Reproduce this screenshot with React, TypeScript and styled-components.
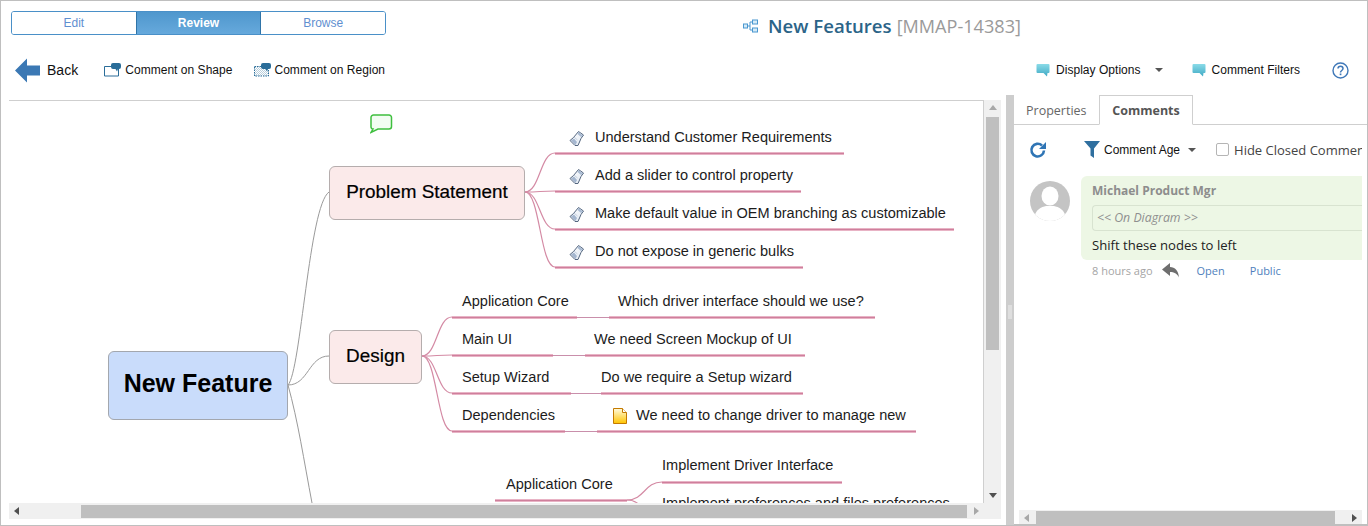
import styled, { createGlobalStyle } from "styled-components";

const Global = createGlobalStyle`
	html, body { margin: 0; padding: 0; background: #fff; }
	body { font-family: "Liberation Sans", Arial, sans-serif; }
`;

const Frame = styled.div`
	width: 1368px;
	height: 526px;
	box-sizing: border-box;
	border: 1px solid #bfbfbf;
	display: flex;
	flex-direction: column;
	overflow: hidden;
	background: #fff;
`;

const Header = styled.div`
	height: 46px;
	display: flex;
	align-items: flex-start;
	flex: none;
`;

const Segments = styled.div`
	margin: 10px 0 0 10px;
	width: 375px;
	height: 24px;
	box-sizing: border-box;
	border: 1px solid #4a90c8;
	border-radius: 3px;
	display: flex;
	overflow: hidden;
`;

const Segment = styled.div<{ $active?: boolean }>`
	flex: 1;
	display: flex;
	align-items: center;
	justify-content: center;
	font-size: 12px;
	color: ${(p) => (p.$active ? "#fff" : "#5f8fd0")};
	font-weight: ${(p) => (p.$active ? "bold" : "normal")};
	background: ${(p) => (p.$active ? "linear-gradient(#4f97cd, #66a9dc)" : "#fff")};
	border-left: ${(p) => (p.$active ? "1px solid #2f74a8" : "none")};
	border-right: ${(p) => (p.$active ? "1px solid #2f74a8" : "none")};
`;

const Title = styled.div`
	margin: 13px 0 0 357px;
	display: flex;
	align-items: center;
	font-family: "Open Sans", sans-serif;
	font-size: 18px;
	line-height: 24px;
	white-space: nowrap;
	svg { margin-right: 10px; }
	b { color: #2b6488; font-weight: 600; font-size: 18.6px; margin-right: 5px; }
	span { color: #9a9a9a; font-size: 18.1px; }
`;

const Toolbar = styled.div`
	height: 48px;
	flex: none;
	display: flex;
	align-items: flex-start;
	padding: 9px 0 0 14px;
	box-sizing: border-box;
`;

const ToolItem = styled.div<{ $gap?: number }>`
	display: flex;
	align-items: center;
	height: 28px;
	font-size: 12px;
	letter-spacing: 0.03px;
	color: #111;
	margin-right: ${(p) => p.$gap ?? 0}px;
	white-space: nowrap;
	svg { flex: none; }
`;

const BackLabel = styled.span`
	font-size: 14px;
	margin-left: 7px;
`;

const ToolSpacer = styled.div`
	width: 651px;
	flex: none;
`;

const Caret = styled.i`
	display: inline-block;
	width: 0;
	height: 0;
	border-left: 4px solid transparent;
	border-right: 4px solid transparent;
	border-top: 4px solid #555;
	margin-left: 14px;
`;

const Main = styled.div`
	flex: 1;
	min-height: 0;
	display: flex;
	align-items: stretch;
`;

const CanvasWrap = styled.div`
	margin: 5px 0 0 8px;
	width: 992px;
	height: 419px;
	flex: none;
	display: grid;
	grid-template-columns: 975px 17px;
	grid-template-rows: 403px 16px;
`;

const Canvas = styled.div`
	position: relative;
	overflow: hidden;
	box-sizing: border-box;
	border-top: 1px solid #cfcfcf;
	border-right: 1px solid #cfcfcf;
	background: #fff;
`;

const Wires = styled.svg`
	position: absolute;
	left: 0;
	top: 0;
`;

const MapBox = styled.div<{ $x: number; $y: number; $w: number; $h: number; $root?: boolean }>`
	position: absolute;
	left: ${(p) => p.$x - 9}px;
	top: ${(p) => p.$y - 101}px;
	width: ${(p) => p.$w}px;
	height: ${(p) => p.$h}px;
	box-sizing: border-box;
	display: flex;
	align-items: center;
	justify-content: center;
	padding-bottom: ${(p) => (p.$root ? 4 : 2)}px;
	border: 1px solid ${(p) => (p.$root ? "#a3a7ae" : "#b5adad")};
	border-radius: 6px;
	background: ${(p) => (p.$root ? "#c9dcfb" : "#fbeaea")};
	font-size: ${(p) => (p.$root ? 25 : 18.9)}px;
	font-weight: ${(p) => (p.$root ? "bold" : "normal")};
	-webkit-text-stroke: ${(p) => (p.$root ? "0" : "0.2px #000")};
	color: #000;
	white-space: nowrap;
`;

const MapText = styled.div<{ $x: number; $y: number }>`
	position: absolute;
	left: ${(p) => p.$x - 9}px;
	top: ${(p) => p.$y - 101 - 10}px;
	height: 20px;
	line-height: 20px;
	font-size: 14.55px;
	color: #1c1c1c;
	white-space: nowrap;
`;

const MapIcon = styled.div<{ $x: number; $y: number }>`
	position: absolute;
	left: ${(p) => p.$x - 9}px;
	top: ${(p) => p.$y - 101}px;
	line-height: 0;
`;

const ScrollTrack = styled.div<{ $vertical?: boolean }>`
	position: relative;
	background: #f0f0f0;
	display: flex;
	flex-direction: ${(p) => (p.$vertical ? "column" : "row")};
	align-items: center;
	justify-content: space-between;
`;

const ScrollThumb = styled.div`
	position: absolute;
	background: #bfbfbf;
`;

const VThumb = styled(ScrollThumb)`
	left: 2px;
	top: 17px;
	width: 13px;
	height: 233px;
`;

const HThumb = styled(ScrollThumb)`
	left: 72px;
	top: 2px;
	width: 886px;
	height: 13px;
`;

const Corner = styled.div`
	background: #f0f0f0;
`;

const Arrow = styled.i<{ $dir: "up" | "down" | "left" | "right"; $dim?: boolean }>`
	display: block;
	width: 0;
	height: 0;
	margin: 5px;
	border: 4px solid transparent;
	${(p) => {
		const c = p.$dim ? "#a8a8a8" : "#505050";
		if (p.$dir === "up") return `border-bottom: 5px solid ${c}; border-top-width: 0;`;
		if (p.$dir === "down") return `border-top: 5px solid ${c}; border-bottom-width: 0;`;
		if (p.$dir === "left") return `border-right: 5px solid ${c}; border-left-width: 0;`;
		return `border-left: 5px solid ${c}; border-right-width: 0;`;
	}}
`;

const Splitter = styled.div`
	width: 8px;
	flex: none;
	margin-left: 5px;
	background: #cdcdcd;
	position: relative;
	&::after {
		content: "";
		position: absolute;
		left: 2px;
		top: 210px;
		width: 4px;
		height: 14px;
		background: #dedede;
	}
`;

const Side = styled.div`
	flex: 1;
	min-width: 0;
	display: flex;
	flex-direction: column;
	font-family: "Open Sans", sans-serif;
	overflow: hidden;
	position: relative;
`;

const Tabs = styled.div`
	height: 30px;
	flex: none;
	box-sizing: border-box;
	border-bottom: 1px solid #cfcfcf;
	display: flex;
	padding-left: 12px;
	align-items: stretch;
`;

const Tab = styled.div<{ $active?: boolean }>`
	display: flex;
	align-items: center;
	font-size: 12.5px;
	box-sizing: border-box;
	padding-top: ${(p) => (p.$active ? 0 : 2)}px;
	color: ${(p) => (p.$active ? "#555" : "#666")};
	font-weight: ${(p) => (p.$active ? 700 : 400)};
	width: ${(p) => (p.$active ? "94px" : "73px")};
	justify-content: ${(p) => (p.$active ? "center" : "flex-start")};
	height: ${(p) => (p.$active ? "30px" : "auto")};
	background: #fff;
	border: ${(p) => (p.$active ? "1px solid #cfcfcf" : "none")};
	border-bottom: ${(p) => (p.$active ? "1px solid #fff" : "none")};
`;

const Filters = styled.div`
	height: 51px;
	width: 348px;
	flex: none;
	display: flex;
	align-items: center;
	padding: 0 0 2px 15px;
	box-sizing: border-box;
	overflow: hidden;
	white-space: nowrap;
	svg { flex: none; }
`;

const FilterLabel = styled.span`
	font-family: "Liberation Sans", Arial, sans-serif;
	font-size: 12px;
	color: #111;
	margin-left: 4px;
	flex: none;
`;

const FilterCaret = styled(Caret)`
	margin: 0 20px 0 8px;
	flex: none;
`;

const Check = styled.span`
	width: 11px;
	height: 11px;
	border: 1px solid #b5b5b5;
	border-radius: 2px;
	background: #fff;
	flex: none;
`;

const CheckLabel = styled.span`
	font-size: 13px;
	color: #444;
	margin-left: 5px;
	flex: none;
`;

const CommentRow = styled.div`
	display: flex;
	align-items: flex-start;
	padding-left: 16px;
	width: 348px;
	box-sizing: border-box;
`;

const Avatar = styled.div`
	width: 40px;
	height: 40px;
	margin-top: 5px;
	flex: none;
	line-height: 0;
`;

const CommentBody = styled.div`
	margin-left: 11px;
	flex: 1;
	min-width: 0;
`;

const Bubble = styled.div`
	height: 84px;
	box-sizing: border-box;
	background: #edf7e5;
	border-radius: 6px 0 0 6px;
	padding: 7px 0 0 11px;
`;

const Author = styled.div`
	font-size: 12px;
	font-weight: 700;
	color: #8d8d8d;
	line-height: 16px;
`;

const OnDiagram = styled.div`
	margin-top: 6px;
	height: 26px;
	box-sizing: border-box;
	border: 1px solid #d8e3d0;
	border-right: none;
	border-radius: 4px 0 0 4px;
	padding-left: 4px;
	font-size: 12.3px;
	font-style: italic;
	line-height: 24px;
	color: #8f8f8f;
`;

const CommentText = styled.div`
	margin-top: 4px;
	font-size: 13.1px;
	line-height: 20px;
	color: #222;
`;

const Meta = styled.div`
	display: flex;
	align-items: center;
	height: 20px;
	padding-left: 11px;
	font-size: 11px;
	color: #a5a5a5;
`;

const MetaLink = styled.span<{ $left: number }>`
	color: #4f7fbd;
	margin-left: ${(p) => p.$left}px;
`;

const SideScroll = styled(ScrollTrack)`
	position: absolute;
	left: 5px;
	bottom: 0;
	width: 343px;
	height: 15px;
`;

const SideThumb = styled(ScrollThumb)`
	left: 17px;
	top: 1px;
	width: 299px;
	height: 13px;
`;

const BottomRule = styled.div`
	position: absolute;
	left: 0;
	right: 0;
	bottom: 0;
	height: 1px;
	background: #bfbfbf;
`;

const BubbleIcon = () => (
	<svg width="14" height="14" viewBox="0 0 14 14" style={{ marginRight: 6 }}>
		<defs>
			<linearGradient id="bub" x1="0" y1="0" x2="0" y2="1">
				<stop offset="0" stopColor="#8adbe8" />
				<stop offset="1" stopColor="#3fa9c4" />
			</linearGradient>
		</defs>
		<path d="M1.500 1h11a1 1 0 0 1 1 1v7a1 1 0 0 1-1 1H11.500l-.5 3.500L7.500 10h-6a1 1 0 0 1-1-1V2a1 1 0 0 1 1-1z" fill="url(#bub)" />
	</svg>
);

const ScrollGlyph = () => (
	<svg width="16" height="17" viewBox="0 0 16 17">
		<defs>
			<linearGradient id="scr" x1="0" y1="0" x2="1" y2="1">
				<stop offset="0" stopColor="#ffffff" />
				<stop offset="1" stopColor="#dfe7f1" />
			</linearGradient>
		</defs>
		<path d="M9.500 1.500L14.500 5 12 8.500 9 15.500 6 15.500 1 10.500 4.500 7.500z" fill="url(#scr)" stroke="#53657e" strokeWidth="1" strokeLinejoin="round" />
		<path d="M9.500 2l4.500 3.500-2 1.500-3.500-3z" fill="#a9bbd3" />
		<path d="M2 10.500l4.500 4.500 1.500-3-3-3.500z" fill="#a4b6cf" />
		<path d="M5 7l3.500 3" stroke="#c3cfdf" strokeWidth="1" fill="none" />
	</svg>
);

const fans: number[][] = [
	[525, 192, 555, 153],
	[525, 192, 555, 191],
	[525, 192, 555, 229],
	[525, 192, 555, 267],
	[422, 356, 452, 317],
	[422, 356, 452, 355],
	[422, 356, 452, 393],
	[422, 356, 452, 431],
	[627, 500, 662, 482],
	[627, 500, 662, 520],
];

const thick: number[][] = [
	[555, 844, 153],
	[555, 801, 191],
	[555, 954, 229],
	[555, 803, 267],
	[452, 577, 317],
	[609, 875, 317],
	[452, 553, 355],
	[585, 805, 355],
	[452, 571, 393],
	[601, 803, 393],
	[452, 565, 431],
	[597, 916, 431],
	[495, 627, 500],
	[662, 842, 482],
];

const thin: number[][] = [
	[577, 609, 317],
	[553, 585, 355],
	[571, 601, 393],
	[565, 597, 431],
];

const scrollItems = [
	{ y: 137, text: "Understand Customer Requirements" },
	{ y: 175, text: "Add a slider to control property" },
	{ y: 213, text: "Make default value in OEM branching as customizable" },
	{ y: 251, text: "Do not expose in generic bulks" },
];

const plainItems = [
	{ x: 462, y: 301, text: "Application Core" },
	{ x: 618, y: 301, text: "Which driver interface should we use?" },
	{ x: 462, y: 339, text: "Main UI" },
	{ x: 594, y: 339, text: "We need Screen Mockup of UI" },
	{ x: 462, y: 377, text: "Setup Wizard" },
	{ x: 601, y: 377, text: "Do we require a Setup wizard" },
	{ x: 462, y: 415, text: "Dependencies" },
	{ x: 636, y: 415, text: "We need to change driver to manage new" },
	{ x: 506, y: 484, text: "Application Core" },
	{ x: 662, y: 465, text: "Implement Driver Interface" },
	{ x: 662, y: 503, text: "Implement preferences and files preferences" },
];

const curve = ([x1, y1, x2, y2]: number[], ox = 9, oy = 101) => {
	const ax = x1 - ox;
	const ay = y1 - oy;
	const bx = x2 - ox;
	const by = y2 - oy;
	const mid = (ax + bx) / 2;
	return `M${ax} ${ay}C${mid} ${ay} ${mid} ${by} ${bx} ${by}`;
};

export default function App() {
	return (
		<>
			<Global />
			<Frame>
				<Header>
					<Segments>
						<Segment>Edit</Segment>
						<Segment $active>Review</Segment>
						<Segment>Browse</Segment>
					</Segments>
					<Title>
						<svg width="15" height="14" viewBox="0 0 15 14" fill="#d6ebf7" stroke="#4a97d0" strokeWidth="1">
							<rect x="0.500" y="5" width="4" height="4" />
							<rect x="9.500" y="1" width="5" height="4" />
							<rect x="9.500" y="9" width="5" height="4" />
							<path d="M4.500 7L7 7M7 3v8M7 3h2.500M7 11h2.500" fill="none" />
						</svg>
						<b>New Features</b>
						<span>[MMAP-14383]</span>
					</Title>
				</Header>
				<Toolbar>
					<ToolItem $gap={26}>
						<svg width="25" height="25" viewBox="0 0 25 25">
							<path d="M0 12.500L12 0.500v7h13v10H12v7z" fill="#3b78b4" />
						</svg>
						<BackLabel>Back</BackLabel>
					</ToolItem>
					<ToolItem $gap={22}>
						<svg width="17" height="14" viewBox="0 0 17 14" style={{ marginRight: 4 }}>
							<path d="M7 3.500H0.500V13h14V6" fill="none" stroke="#2a6d99" />
							<path d="M9 0h6a2 2 0 0 1 2 2v2a2 2 0 0 1-2 2h-1l-1 2.500L11.500 6H9a2 2 0 0 1-2-2V2a2 2 0 0 1 2-2z" fill="#2a6d99" />
						</svg>
						Comment on Shape
					</ToolItem>
					<ToolItem>
						<svg width="17" height="14" viewBox="0 0 17 14" style={{ marginRight: 3 }}>
							<defs>
								<pattern id="hatch" width="2" height="2" patternUnits="userSpaceOnUse">
									<path d="M0 2L2 0" stroke="#b9cfdd" strokeWidth="1" />
								</pattern>
							</defs>
							<rect x="0.500" y="3.500" width="14" height="9.500" fill="url(#hatch)" stroke="#2a6d99" strokeDasharray="1.500 1" />
							<path d="M9 0h6a2 2 0 0 1 2 2v2a2 2 0 0 1-2 2h-1l-1 2.500L11.500 6H9a2 2 0 0 1-2-2V2a2 2 0 0 1 2-2z" fill="#2a6d99" />
						</svg>
						Comment on Region
					</ToolItem>
					<ToolSpacer />
					<ToolItem $gap={29}>
						<BubbleIcon />
						Display Options
						<Caret />
					</ToolItem>
					<ToolItem $gap={32}>
						<BubbleIcon />
						Comment Filters
					</ToolItem>
					<ToolItem>
						<svg width="17" height="17" viewBox="0 0 17 17">
							<circle cx="8.500" cy="8.500" r="7.500" fill="#fff" stroke="#3f78b8" strokeWidth="1.400" />
							<path d="M6 6.500c0-3 5-3 5 0 0 2-2.500 2-2.500 4" fill="none" stroke="#3f78b8" strokeWidth="1.500" />
							<rect x="7.700" y="11.500" width="1.700" height="1.700" fill="#3f78b8" />
						</svg>
					</ToolItem>
				</Toolbar>
				<Main>
					<CanvasWrap>
						<Canvas>
							<Wires width="975" height="403" fill="none">
								<g stroke="#9a9a9a" strokeWidth="1">
									<path d="M279 284C292 270 300 105 320 91" />
									<path d={curve([288, 385, 329, 356])} />
									<path d="M279 284C289 320 295 360 303 402" />
								</g>
								<g stroke="#d48aa4" strokeWidth="1.200">
									{fans.map((f) => (
										<path key={f.join()} d={curve(f)} />
									))}
								</g>
								<g stroke="#c98fab" strokeWidth="1">
									{thin.map(([a, b, y]) => (
										<path key={`${a}-${y}`} d={`M${a - 9} ${y - 100.5}H${b - 9}`} />
									))}
								</g>
								<g stroke="#e8b3c5" strokeWidth="3">
									{thick.map(([a, b, y]) => (
										<path key={`${a}-${y}`} d={`M${a - 9} ${y - 100.5}H${b - 9}`} />
									))}
								</g>
								<g stroke="#cf7f9c" strokeWidth="1">
									{thick.map(([a, b, y]) => (
										<path key={`${a}-${y}`} d={`M${a - 9} ${y - 100.5}H${b - 9}`} />
									))}
								</g>
							</Wires>
							<MapIcon $x={370} $y={114}>
								<svg width="23" height="20" viewBox="0 0 23 20">
									<path
										d="M3.500 1h15.500a2.500 2.500 0 0 1 2.500 2.500v9a2.500 2.500 0 0 1-2.500 2.500H8L1 18.500 3 15a2.200 2.200 0 0 1-2-2.500v-9A2.500 2.500 0 0 1 3.500 1z"
										fill="#f3fdf3"
										stroke="#3fbf3f"
										strokeWidth="1.500"
									/>
								</svg>
							</MapIcon>
							<MapBox $root $x={108} $y={351} $w={180} $h={69}>
								New Feature
							</MapBox>
							<MapBox $x={329} $y={166} $w={196} $h={54}>
								Problem Statement
							</MapBox>
							<MapBox $x={329} $y={330} $w={93} $h={54}>
								Design
							</MapBox>
							{scrollItems.map((it) => (
								<div key={it.y}>
									<MapIcon $x={569} $y={it.y - 7}>
										<ScrollGlyph />
									</MapIcon>
									<MapText $x={595} $y={it.y}>
										{it.text}
									</MapText>
								</div>
							))}
							{plainItems.map((it) => (
								<MapText key={it.text + it.x} $x={it.x} $y={it.y}>
									{it.text}
								</MapText>
							))}
							<MapIcon $x={613} $y={408}>
								<svg width="14" height="16" viewBox="0 0 14 16">
									<defs>
										<linearGradient id="note" x1="0" y1="0" x2="0" y2="1">
											<stop offset="0" stopColor="#fffbe0" />
											<stop offset="1" stopColor="#ffc400" />
										</linearGradient>
									</defs>
									<path d="M0.500 0.500h9l4 4v11h-13z" fill="url(#note)" stroke="#c47a00" />
									<path d="M9.500 0.500v4h4" fill="#fff" stroke="#c47a00" />
								</svg>
							</MapIcon>
						</Canvas>
						<ScrollTrack $vertical>
							<Arrow $dir="up" $dim />
							<VThumb />
							<Arrow $dir="down" />
						</ScrollTrack>
						<ScrollTrack>
							<Arrow $dir="left" />
							<HThumb />
							<Arrow $dir="right" $dim />
						</ScrollTrack>
						<Corner />
					</CanvasWrap>
					<Splitter />
					<Side>
						<Tabs>
							<Tab>Properties</Tab>
							<Tab $active>Comments</Tab>
						</Tabs>
						<Filters>
							<svg width="18" height="18" viewBox="0 0 18 18" style={{ marginRight: 37 }}>
								<path d="M15 9.500a6.300 6.300 0 1 1-2-5" fill="none" stroke="#2f75b5" strokeWidth="2.600" />
								<path d="M17 1v7h-7z" fill="#2f75b5" />
							</svg>
							<svg width="16" height="17" viewBox="0 0 16 17">
								<path d="M0 0h16L10 7.500V17L6.500 14.500V7.500z" fill="#2f6f9f" />
							</svg>
							<FilterLabel>Comment Age</FilterLabel>
							<FilterCaret />
							<Check />
							<CheckLabel>Hide Closed Comments</CheckLabel>
						</Filters>
						<CommentRow>
							<Avatar>
								<svg width="40" height="40" viewBox="0 0 40 40">
									<defs>
										<clipPath id="av">
											<circle cx="20" cy="20" r="20" />
										</clipPath>
									</defs>
									<circle cx="20" cy="20" r="20" fill="#c4c4c4" />
									<g clipPath="url(#av)" fill="#fff">
										<ellipse cx="20" cy="15" rx="8.500" ry="9.500" />
										<path d="M4 40c0-12 8-14 12-15h8c4 1 12 3 12 15z" />
									</g>
								</svg>
							</Avatar>
							<CommentBody>
								<Bubble>
									<Author>Michael Product Mgr</Author>
									<OnDiagram>&lt;&lt; On Diagram &gt;&gt;</OnDiagram>
									<CommentText>Shift these nodes to left</CommentText>
								</Bubble>
								<Meta>
									8 hours ago
									<svg width="18" height="15" viewBox="0 0 18 15" style={{ marginLeft: 9 }}>
										<path d="M8 0L0 6.500 8 13V9c4 0 7 1.500 9 5.500C16.500 8 13 4 8 4z" fill="#6e6e6e" />
									</svg>
									<MetaLink $left={17}>Open</MetaLink>
									<MetaLink $left={25}>Public</MetaLink>
								</Meta>
							</CommentBody>
						</CommentRow>
						<SideScroll>
							<Arrow $dir="left" $dim />
							<SideThumb />
							<Arrow $dir="right" />
						</SideScroll>
						<BottomRule />
					</Side>
				</Main>
			</Frame>
		</>
	);
}
